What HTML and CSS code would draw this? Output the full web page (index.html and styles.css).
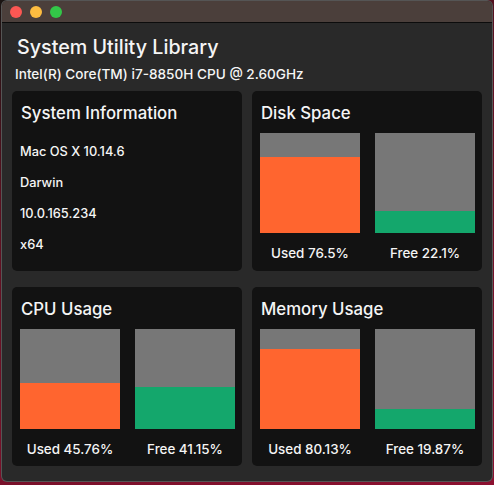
FILE: index.html
```html
<!DOCTYPE html>
<html lang="en">
<head>
    <meta charset="UTF-8">
    <meta name="viewport" content="width=device-width, initial-scale=1.0">
    <title>System Utility Library</title>
    <link rel="stylesheet" href="styles.css">
</head>
<body>
    <div class="window">
        <div class="titlebar">
            <span class="light red"></span>
            <span class="light yellow"></span>
            <span class="light green"></span>
        </div>
        <div class="content">
            <h1>System Utility Library</h1>
            <div class="cpu-name">Intel(R) Core(TM) i7-8850H CPU @ 2.60GHz</div>
            <div class="grid">
                <div class="panel">
                    <h2>System Information</h2>
                    <div class="info-row">Mac OS X 10.14.6</div>
                    <div class="info-row">Darwin</div>
                    <div class="info-row">10.0.165.234</div>
                    <div class="info-row">x64</div>
                </div>
                <div class="panel">
                    <h2>Disk Space</h2>
                    <div class="charts">
                        <div class="chart">
                            <div class="bar"><div class="fill used" style="height: 76%"></div></div>
                            <div class="label">Used 76.5%</div>
                        </div>
                        <div class="chart">
                            <div class="bar"><div class="fill free" style="height: 22%"></div></div>
                            <div class="label">Free 22.1%</div>
                        </div>
                    </div>
                </div>
                <div class="panel">
                    <h2>CPU Usage</h2>
                    <div class="charts">
                        <div class="chart">
                            <div class="bar"><div class="fill used" style="height: 46%"></div></div>
                            <div class="label">Used 45.76%</div>
                        </div>
                        <div class="chart">
                            <div class="bar"><div class="fill free" style="height: 42%"></div></div>
                            <div class="label">Free 41.15%</div>
                        </div>
                    </div>
                </div>
                <div class="panel">
                    <h2>Memory Usage</h2>
                    <div class="charts">
                        <div class="chart">
                            <div class="bar"><div class="fill used" style="height: 80%"></div></div>
                            <div class="label">Used 80.13%</div>
                        </div>
                        <div class="chart">
                            <div class="bar"><div class="fill free" style="height: 20%"></div></div>
                            <div class="label">Free 19.87%</div>
                        </div>
                    </div>
                </div>
            </div>
        </div>
    </div>
</body>
</html>
```

FILE: styles.css
```css
html, body {
    height: 100%;
}
body {
    margin: 0;
    padding: 1px 2px 4px 2px;
    box-sizing: border-box;
    overflow: hidden;
    font-family: Inter, "Liberation Sans", sans-serif;
    font-weight: 500;
    color: #f5f5f5;
    background: linear-gradient(160deg, #1a1412 0%, #5a1020 30%, #8c1030 100%);
}
.window {
    height: 480px;
    background-color: #292929;
    border-radius: 5px;
    box-shadow: 0 0 0 1px #555;
    overflow: hidden;
}
.titlebar {
    display: flex;
    align-items: center;
    gap: 8px;
    height: 21px;
    padding-left: 8px;
    background-color: #4b3f3b;
    border-bottom: 1px solid #0c0c0c;
}
.light {
    width: 12px;
    height: 12px;
    border-radius: 50%;
}
.red { background-color: #fc5753; }
.yellow { background-color: #fdbc40; }
.green { background-color: #33c748; }
.content {
    padding: 0 10px;
}
h1 {
    margin: 0;
    padding: 12px 0 0 5px;
    font-size: 19.7px;
    font-weight: 500;
    line-height: 25px;
}
.cpu-name {
    padding: 6px 0 0 3px;
    font-size: 13.6px;
    line-height: 16px;
}
.grid {
    display: grid;
    grid-template-columns: 230px 230px;
    grid-template-rows: 180px 179px;
    column-gap: 10px;
    row-gap: 16px;
    margin-top: 9px;
}
.panel {
    background-color: #121212;
    border-radius: 5px;
    padding: 0 8px;
}
h2 {
    margin: 0;
    padding: 11px 0 0 1px;
    font-size: 16.8px;
    font-weight: 500;
    line-height: 22px;
}
.info-row {
    font-size: 12.8px;
    line-height: 16px;
    margin-top: 15px;
}
h2 + .info-row {
    margin-top: 20px;
}
.charts {
    display: flex;
    gap: 15px;
    margin-top: 9px;
}
.chart {
    flex: none;
    width: 100px;
}
.bar {
    display: flex;
    align-items: flex-end;
    height: 100px;
    background-color: #777;
}
.fill {
    width: 100%;
}
.used { background-color: #ff652f; }
.free { background-color: #14a76c; }
.label {
    margin-top: 12px;
    text-align: center;
    font-size: 13.4px;
    line-height: 16px;
}
```
